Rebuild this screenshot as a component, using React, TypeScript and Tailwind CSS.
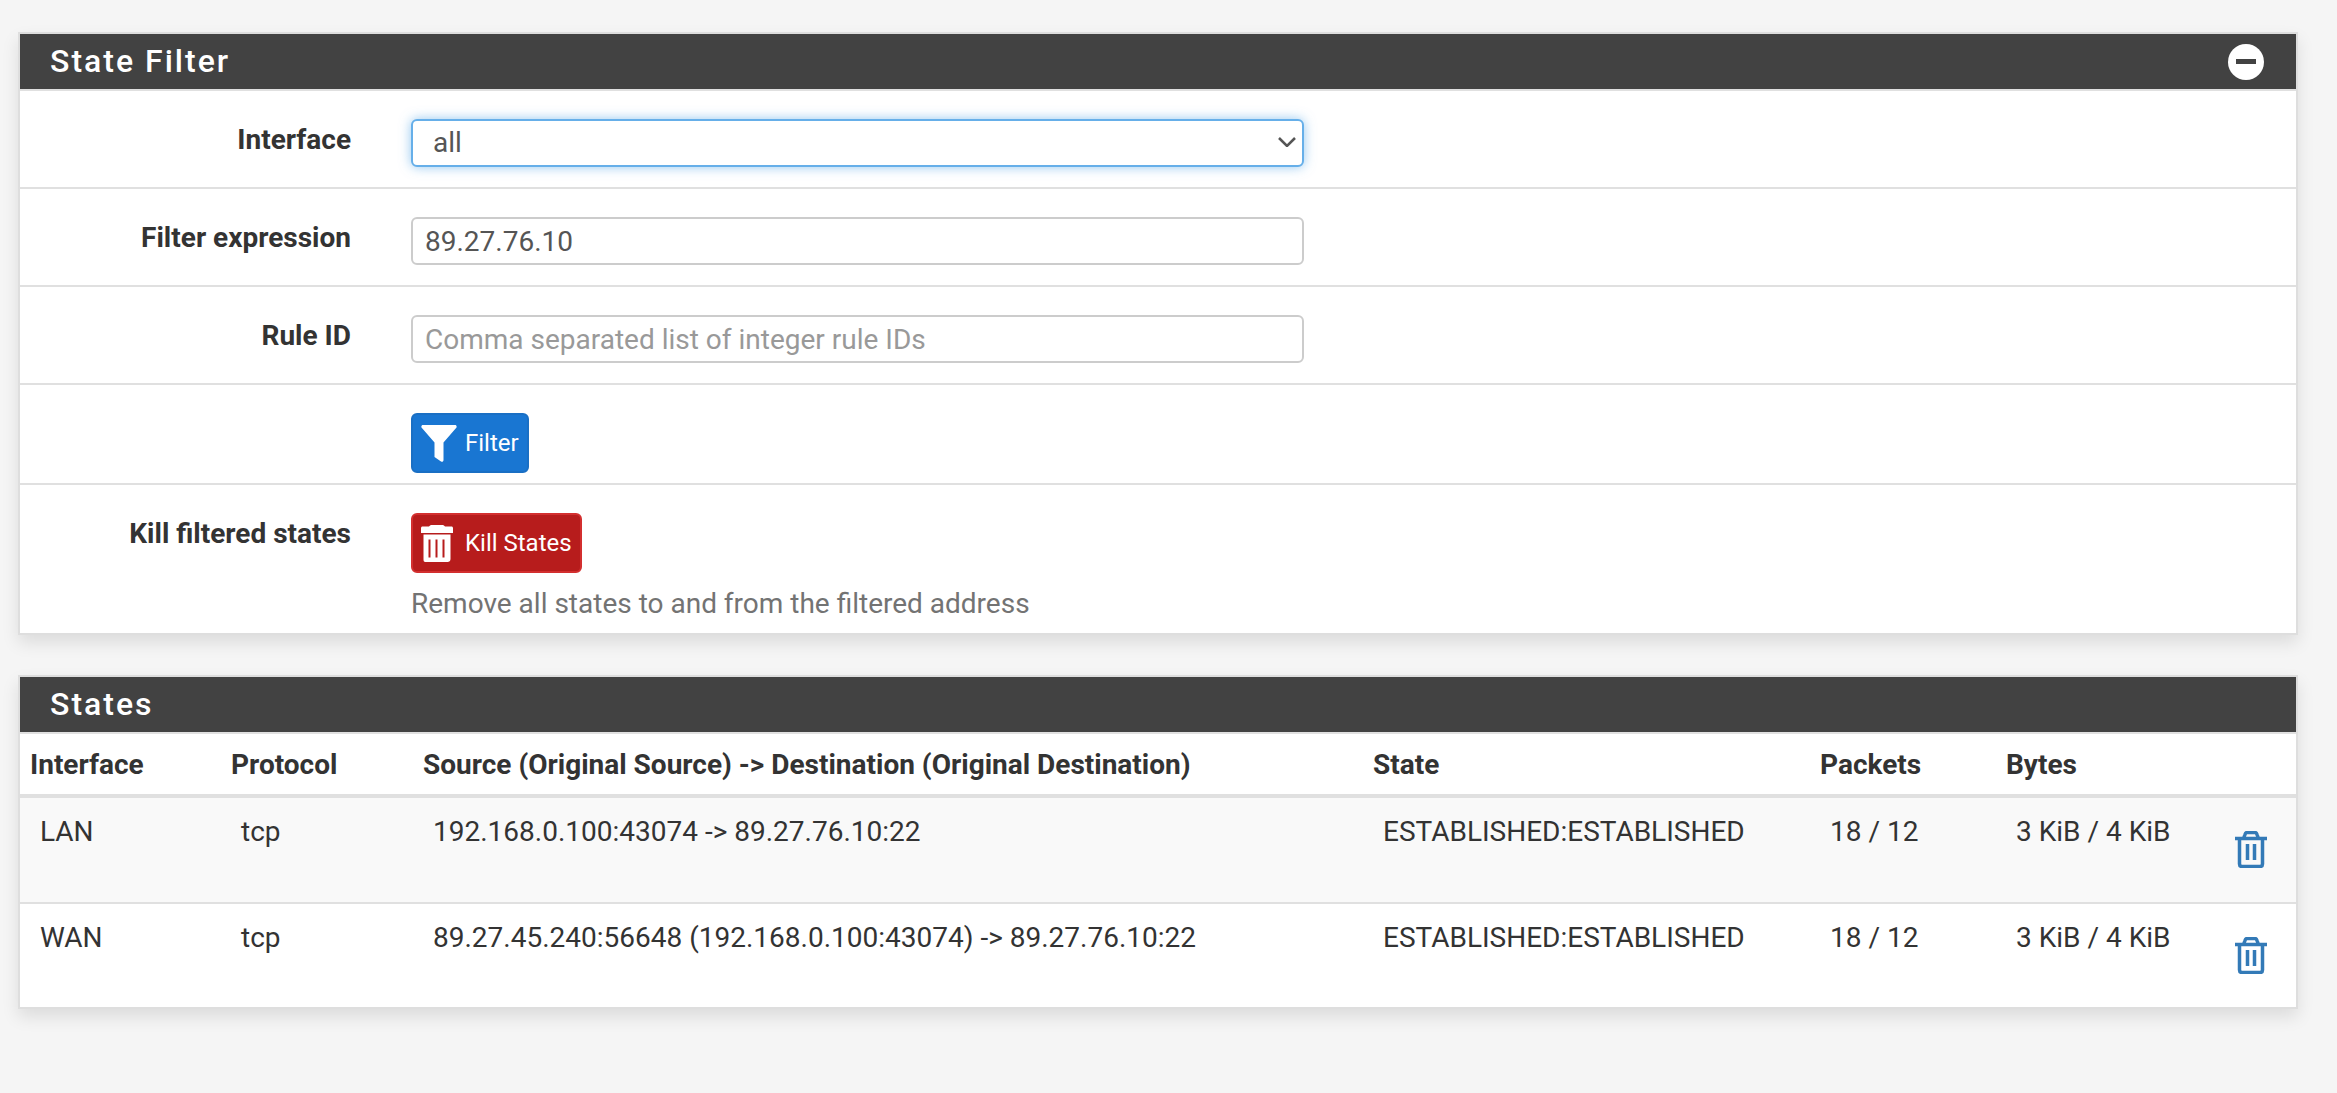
import React from 'react';

const FilterIcon = () => (
  <svg viewBox="0 0 36 37" className="w-[36px] h-[37px] shrink-0" fill="#fff">
    <path d="M.5 2.500C0 1 .8 0 2 0h32c1.200 0 2 1 1.500 2.500L22.500 17.500V35c0 1.500-1.200 2.300-2.500 1.500l-6.500-4.500V17.500z" />
  </svg>
);

const SolidTrash = () => (
  <svg viewBox="0 0 32 37" className="w-[32px] h-[37px] shrink-0">
    <path fill="#fff" d="M11 0h10c1.500 0 2.500.6 3 1.500h6.500c.8 0 1.500.6 1.500 1.500v5H0V3c0-.9.7-1.500 1.500-1.500H8C8.500.6 9.500 0 11 0zM2.500 9.500h27V34c0 1.800-1.200 3-3 3h-22c-1.800 0-2-1.200-2-3z" />
    <path fill="#b71c1c" d="M7.500 14.500h2v18h-2zM14.500 14.500h2v18h-2zM21.500 14.500h2v18h-2z" />
  </svg>
);

const OutlineTrash = () => (
  <svg viewBox="0 0 32 37" className="w-[32px] h-[37px]" fill="none" stroke="#337ab7" strokeWidth="3.500">
    <path d="M0 7.500h32M4.500 7.500V33c0 1.500 1 2.500 2.500 2.500h18c1.500 0 2.500-1 2.500-2.500V7.500M8.500 7.500l1.500-4c.4-1.200 1-2 2-2h8c1 0 1.600.8 2 2l1.500 4M12.500 13v16M19.500 13v16" />
  </svg>
);

const rows = [
  { iface: 'LAN', proto: 'tcp', path: '192.168.0.100:43074 -> 89.27.76.10:22', striped: true },
  { iface: 'WAN', proto: 'tcp', path: '89.27.45.240:56648 (192.168.0.100:43074) -> 89.27.76.10:22', striped: false },
];

const Panel = ({ title, action, children }: { title: string; action?: React.ReactNode; children: React.ReactNode }) => (
  <div className="border-2 border-[#dedede] bg-white shadow-[0_8px_16px_rgba(0,0,0,0.1)]">
    <div className="h-[55px] bg-[#424242] flex items-center justify-between pl-[30px] pr-[32px]">
      <h2 className="text-[32px] font-medium text-white tracking-[2px] leading-none pb-[2px]">{title}</h2>
      {action}
    </div>
    {children}
  </div>
);

const FormRow = ({ label, children, className }: { label?: string; children: React.ReactNode; className: string }) => (
  <div className={`flex border-t-2 border-[#e0e0e0] ${className}`}>
    <div className="w-[331px] text-right font-bold leading-[42px] shrink-0">{label}</div>
    <div className="ml-[60px] w-[893px]">{children}</div>
  </div>
);

export default function App() {
  return (
    <div className="min-h-screen bg-[#f5f5f5] pt-[32px] pl-[18px] font-['Roboto',sans-serif] text-[28px] text-[#333]">
      <div className="w-[2280px] flex flex-col gap-[40px]">
        <Panel
          title="State Filter"
          action={
            <span className="w-[36px] h-[36px] rounded-full bg-white flex items-center justify-center">
              <span className="w-[20px] h-[5px] bg-[#424242]" />
            </span>
          }
        >
          <FormRow label="Interface" className="pt-[28px] pb-[20px]">
            <div className="relative">
              <select className="w-full h-[48px] appearance-none bg-white border-2 border-[#66afe9] rounded-md pl-[20px] pr-[8px] text-[#555] outline-none shadow-[0_0_12px_rgba(102,175,233,0.7)]">
                <option>all</option>
              </select>
              <svg viewBox="0 0 18 10" className="absolute right-[8px] top-[18px] w-[18px] h-[10px]" fill="none" stroke="#555" strokeWidth="2.500">
                <path d="M1 1l8 8 8-8" />
              </svg>
            </div>
          </FormRow>
          <FormRow label="Filter expression" className="pt-[28px] pb-[20px]">
            <input
              className="w-full h-[48px] border-2 border-[#ccc] rounded-md px-[12px] text-[#555] outline-none"
              defaultValue="89.27.76.10"
            />
          </FormRow>
          <FormRow label="Rule ID" className="pt-[28px] pb-[20px]">
            <input
              className="w-full h-[48px] border-2 border-[#ccc] rounded-md px-[12px] text-[#555] outline-none placeholder:text-[#999]"
              placeholder="Comma separated list of integer rule IDs"
            />
          </FormRow>
          <FormRow className="pt-[28px] pb-[10px]">
            <button className="h-[60px] w-[118px] bg-[#1976d2] border-2 border-[#1a6fc4] rounded-md flex items-center gap-[8px] pl-[8px] text-white text-[24px]">
              <FilterIcon />
              Filter
            </button>
          </FormRow>
          <FormRow label="Kill filtered states" className="pt-[28px] pb-[12px]">
            <button className="h-[60px] w-[171px] bg-[#b71c1c] border-2 border-[#d32f2f] rounded-md flex items-center gap-[12px] pl-[8px] text-white text-[24px]">
              <SolidTrash />
              Kill States
            </button>
            <p className="mt-[14px] leading-[34px] text-[#737373]">Remove all states to and from the filtered address</p>
          </FormRow>
        </Panel>

        <Panel title="States">
          <div className="border-t-2 border-[#e0e0e0]">
            <table className="w-full table-fixed border-separate border-spacing-0">
              <colgroup>
                <col className="w-[201px]" />
                <col className="w-[192px]" />
                <col className="w-[950px]" />
                <col className="w-[447px]" />
                <col className="w-[186px]" />
                <col className="w-[226px]" />
                <col />
              </colgroup>
              <thead>
                <tr className="text-left font-bold">
                  {['Interface', 'Protocol', 'Source (Original Source) -> Destination (Original Destination)', 'State', 'Packets', 'Bytes', ''].map((head) => (
                    <th key={head} className="h-[64px] pl-[10px] pt-[2px] border-b-4 border-[#e0e0e0] whitespace-nowrap">{head}</th>
                  ))}
                </tr>
              </thead>
              <tbody>
                {rows.map((row) => {
                  const cell = row.striped ? 'h-[104px] align-top pl-[20px] pt-[13px] bg-[#f9f9f9]' : 'h-[105px] align-top pl-[20px] pt-[13px] border-t-2 border-[#e0e0e0] bg-white';
                  return (
                    <tr key={row.iface}>
                      <td className={cell}>{row.iface}</td>
                      <td className={cell}>{row.proto}</td>
                      <td className={cell}>{row.path}</td>
                      <td className={cell}>ESTABLISHED:ESTABLISHED</td>
                      <td className={cell}>18 / 12</td>
                      <td className={cell}>3 KiB / 4 KiB</td>
                      <td className={row.striped ? 'h-[104px] align-top pl-[13px] pt-[33px] bg-[#f9f9f9]' : 'h-[105px] align-top pl-[13px] pt-[33px] border-t-2 border-[#e0e0e0] bg-white'}>
                        <OutlineTrash />
                      </td>
                    </tr>
                  );
                })}
              </tbody>
            </table>
          </div>
        </Panel>
      </div>
    </div>
  );
}
